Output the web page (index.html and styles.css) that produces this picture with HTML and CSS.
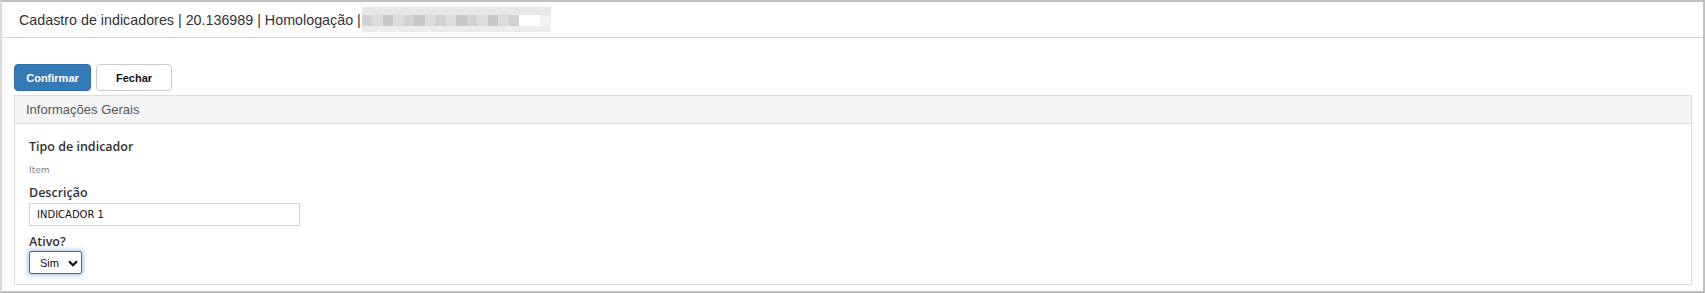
FILE: index.html
```html
<!DOCTYPE html>
<html lang="pt-BR">
<head>
<meta charset="utf-8">
<title>Cadastro de indicadores</title>
<link rel="stylesheet" href="styles.css">
</head>
<body>
<div class="frame">
  <header class="topbar">
    <span class="title">Cadastro de indicadores | 20.136989 | Homologação |</span>
    <span class="redacted">
      <i class="c1"></i><i class="c2"></i><i class="c3"></i><i class="c2"></i><i class="c1"></i><i class="c3"></i><i class="c2"></i><i class="c1"></i><i class="c2"></i><i class="c3"></i><i class="c1"></i><i class="c2"></i><i class="c3"></i><i class="c2"></i><i class="c1"></i><i class="c4"></i><i class="c4"></i><i class="c5"></i>
    </span>
  </header>
  <main class="content">
    <div class="actions">
      <button class="btn btn-primary">Confirmar</button>
      <button class="btn btn-default">Fechar</button>
    </div>
    <section class="panel">
      <div class="panel-heading">Informações Gerais</div>
      <div class="panel-body">
        <div class="label">Tipo de indicador</div>
        <div class="static">Item</div>
        <div class="label label-tight">Descrição</div>
        <input class="input" type="text" value="INDICADOR 1">
        <div class="label label-tight">Ativo?</div>
        <div class="select-wrap">
          <select class="select"><option>Sim</option><option>Não</option></select>
          <svg class="chev" width="10" height="7" viewBox="0 0 10 7"><path d="M1 1.2 L5 5.2 L9 1.2" fill="none" stroke="#111" stroke-width="2.2"/></svg>
        </div>
      </div>
    </section>
  </main>
</div>
</body>
</html>
```

FILE: styles.css
```css
html, body {
  margin: 0;
  padding: 0;
  background: #fff;
}

.frame {
  box-sizing: border-box;
  width: 1705px;
  height: 293px;
  border-top: 2px solid #c0c0c0;
  border-right: 2px solid #c0c0c0;
  border-bottom: 2px solid #c0c0c0;
  border-left: 2px solid #dcdcdc;
  display: flex;
  flex-direction: column;
}

.topbar {
  height: 35px;
  border-bottom: 1px solid #d6d6d6;
  display: flex;
  align-items: center;
  padding-left: 17px;
  font-family: "Liberation Sans", Arial, sans-serif;
  font-size: 14.3px;
  color: #333;
}

.title {
  white-space: pre;
  margin-top: 1px;
}

.redacted {
  display: grid;
  grid-template-columns: repeat(18, 10.5px);
  height: 25px;
  margin-left: 1px;
  margin-top: 0px;
  background: #f0f0f0;
}
.redacted i {
  display: block;
  background:
    linear-gradient(#e8e8e8 0 8px, transparent 8px 19px, #ececec 19px);
}
.redacted .c1 { background-color: #d2d2d4; }
.redacted .c2 { background-color: #dcdcdc; }
.redacted .c3 { background-color: #c8c8ca; }
.redacted .c4 { background-color: #ffffff; }
.redacted .c5 { background-color: #f2f2f2; }

.content {
  padding: 26px 11px 0 12px;
}

.actions {
  display: flex;
  gap: 5px;
  margin-bottom: 4px;
}

.btn {
  box-sizing: border-box;
  height: 27px;
  border-radius: 4px;
  font-family: "Liberation Sans", Arial, sans-serif;
  font-weight: bold;
  font-size: 11px;
  padding: 0;
  cursor: pointer;
}
.btn-primary {
  width: 77px;
  background: #337ab7;
  border: 1px solid #2e6da4;
  color: #fff;
}
.btn-default {
  width: 76px;
  background: #fff;
  border: 1px solid #ccc;
  color: #111;
}

.panel {
  border: 1px solid #dddddd;
  height: 190px;
  box-sizing: border-box;
}

.panel-heading {
  height: 27px;
  background: #f5f5f5;
  border-bottom: 1px solid #dddddd;
  display: flex;
  align-items: center;
  padding-left: 11px;
  font-family: "Liberation Sans", Arial, sans-serif;
  font-size: 13px;
  color: #555;
}

.panel-body {
  padding: 14px 14px 0 14px;
  display: flex;
  flex-direction: column;
  align-items: flex-start;
}

.label {
  font-family: "Open Sans", "Noto Sans", sans-serif;
  font-weight: 600;
  font-size: 12.5px;
  line-height: 18px;
  color: #333;
}

.static {
  font-family: "DejaVu Sans", Verdana, sans-serif;
  font-size: 9px;
  color: #808080;
  line-height: 14px;
  margin-top: 7px;
}

.label-tight {
  margin-top: 7px;
}

.input {
  box-sizing: border-box;
  width: 271px;
  height: 23px;
  margin: 1px 0 0 0;
  border: 1px solid #d4d4d4;
  padding: 0 0 0 7px;
  font-family: "DejaVu Sans", Verdana, sans-serif;
  font-size: 10px;
  color: #111;
  outline: none;
}

.label-tight + .select-wrap { margin-top: 0; }

.select-wrap {
  position: relative;
  margin-top: 0;
}

.select {
  -webkit-appearance: none;
  appearance: none;
  box-sizing: border-box;
  width: 53px;
  height: 23px;
  border: 1px solid #3f6f9f;
  border-radius: 2px;
  box-shadow: 0 0 4px 1px rgba(102, 155, 215, 0.65);
  background: #fff;
  padding: 0 0 0 10px;
  font-family: "Liberation Sans", Arial, sans-serif;
  font-size: 11px;
  color: #111;
  outline: none;
}

.chev {
  position: absolute;
  left: 39px;
  top: 9px;
  pointer-events: none;
}
```
